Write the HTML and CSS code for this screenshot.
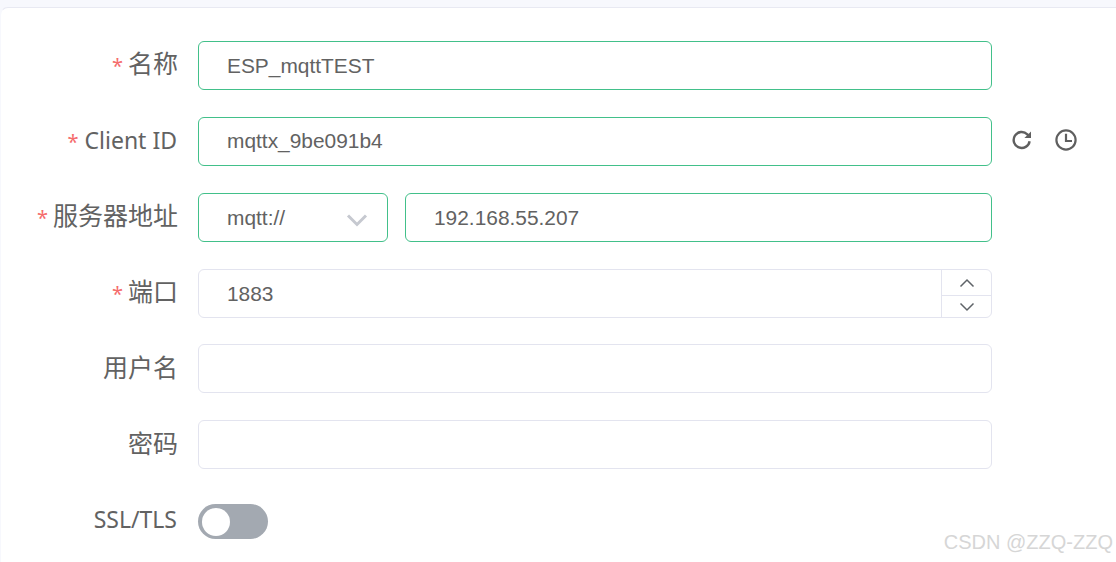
FILE: index.html
```html
<!DOCTYPE html>
<html lang="zh-CN">
<head>
    <meta charset="UTF-8">
    <meta name="viewport" content="width=device-width, initial-scale=1.0">
    <title>MQTTX 连接设置</title>
    <link rel="stylesheet" href="styles.css">
</head>
<body>
    <div class="card">
        <form class="conn-form">
            <div class="form-row">
                <label class="form-label"><span class="req">*</span>名称</label>
                <div class="field"><div class="input active">ESP_mqttTEST</div></div>
            </div>
            <div class="form-row">
                <label class="form-label latin client-label"><span class="req">*</span>Client ID</label>
                <div class="field"><div class="input active shift-up">mqttx_9be091b4</div></div>
                <div class="row-icons">
                    <svg class="icon" viewBox="0 0 24 24" width="24" height="24"><path d="M19.600 13.200a8 8 0 1 1-2.300-6.900L20 9" fill="none" stroke="#5f5f5f" stroke-width="2.400"/><path d="M21 3.400V10h-6.600z" fill="#5f5f5f"/></svg>
                    <svg class="icon" viewBox="0 0 24 24" width="24" height="24"><circle cx="12" cy="12" r="9.600" fill="none" stroke="#5f5f5f" stroke-width="2.200"/><path d="M12 5.800V13h6" fill="none" stroke="#5f5f5f" stroke-width="2.200"/></svg>
                </div>
            </div>
            <div class="form-row">
                <label class="form-label"><span class="req">*</span>服务器地址</label>
                <div class="field split">
                    <div class="input active select">mqtt://
                        <svg class="chevron" viewBox="0 0 22 14" width="22" height="14"><path d="M2 2.500l9 9 9-9" fill="none" stroke="#c6c9d0" stroke-width="3"/></svg>
                    </div>
                    <div class="input active">192.168.55.207</div>
                </div>
            </div>
            <div class="form-row">
                <label class="form-label"><span class="req">*</span>端口</label>
                <div class="field">
                    <div class="input number">1883
                        <div class="stepper">
                            <span class="step"><svg viewBox="0 0 16 10" width="16" height="10"><path d="M1.500 8.500L8 2l6.500 6.500" fill="none" stroke="#5f6368" stroke-width="1.500"/></svg></span>
                            <span class="step"><svg viewBox="0 0 16 10" width="16" height="10"><path d="M1.500 1.500L8 8l6.500-6.500" fill="none" stroke="#5f6368" stroke-width="1.500"/></svg></span>
                        </div>
                    </div>
                </div>
            </div>
            <div class="form-row pull-up">
                <label class="form-label">用户名</label>
                <div class="field"><div class="input"></div></div>
            </div>
            <div class="form-row">
                <label class="form-label">密码</label>
                <div class="field"><div class="input"></div></div>
            </div>
            <div class="form-row switch-row">
                <label class="form-label latin ssl-label">SSL/TLS</label>
                <div class="field"><div class="switch"><span class="knob"></span></div></div>
            </div>
        </form>
    </div>
    <div class="watermark">CSDN @ZZQ-ZZQ</div>
</body>
</html>
```

FILE: styles.css
```css
html, body {
    height: 100%;
}
body {
    margin: 0;
    background-color: #f7f8fd;
    font-family: "Noto Sans", "Noto Sans CJK SC", sans-serif;
    color: #626262;
    overflow: hidden;
}
.card {
    margin-top: 7px;
    height: 555px;
    box-sizing: border-box;
    background: white;
    border-top: 1px solid #e8e9f2;
    border-left: 1px solid #f7f8fd;
    border-top-left-radius: 8px;
    padding-top: 33px;
}
.conn-form {
    display: flex;
    flex-direction: column;
    gap: 27px;
}
.form-row {
    display: flex;
    align-items: center;
    height: 49px;
}
.pull-up {
    margin-top: -1px;
}
.form-label {
    width: 177px;
    text-align: right;
    font-size: 25px;
    line-height: 32px;
    margin-top: -3px;
    flex-shrink: 0;
}
.form-label.latin {
    font-size: 23px;
    padding-right: 1px;
    box-sizing: border-box;
}
.client-label {
    margin-top: -1px;
}
.ssl-label {
    margin-top: -5px;
}
.req {
    color: #f56c6c;
    font-size: 20px;
    margin-right: 5px;
}
.latin .req {
    margin-right: 6px;
}
.field {
    width: 794px;
    margin-left: 20px;
}
.split {
    display: flex;
    gap: 17px;
}
.input {
    box-sizing: border-box;
    height: 49px;
    padding: 0 28px;
    border: 1px solid #e3e4ef;
    border-radius: 6px;
    font-family: "Liberation Sans", Arial, sans-serif;
    font-size: 20.9px;
    line-height: 47px;
    position: relative;
}
.shift-up {
    line-height: 45px;
}
.split .input {
    flex: 1;
}
.active {
    border-color: #42c08a;
}
.split .select {
    flex: 0 0 190px;
}
.chevron {
    position: absolute;
    right: 19px;
    top: 19px;
}
.stepper {
    position: absolute;
    right: 0;
    top: 0;
    bottom: 0;
    width: 49px;
    border-left: 1px solid #e3e4ef;
    display: flex;
    flex-direction: column;
}
.step {
    flex: 1;
    display: flex;
    align-items: center;
    justify-content: center;
}
.step:first-child {
    flex: 0 0 25px;
}
.step + .step {
    border-top: 1px solid #e3e4ef;
}
.row-icons {
    display: flex;
    gap: 20px;
    margin-left: 18px;
    margin-top: -3px;
}
.icon {
    display: block;
}
.switch-row {
    margin-top: 1px;
}
.switch {
    width: 70px;
    height: 35px;
    border-radius: 18px;
    background: #a3a9b1;
    position: relative;
}
.knob {
    position: absolute;
    left: 4px;
    top: 4px;
    width: 28px;
    height: 28px;
    border-radius: 50%;
    background: white;
}
.watermark {
    position: absolute;
    right: 3px;
    top: 531px;
    font-family: "Liberation Sans", Arial, sans-serif;
    font-size: 20px;
    color: #d6d6d6;
}
```
